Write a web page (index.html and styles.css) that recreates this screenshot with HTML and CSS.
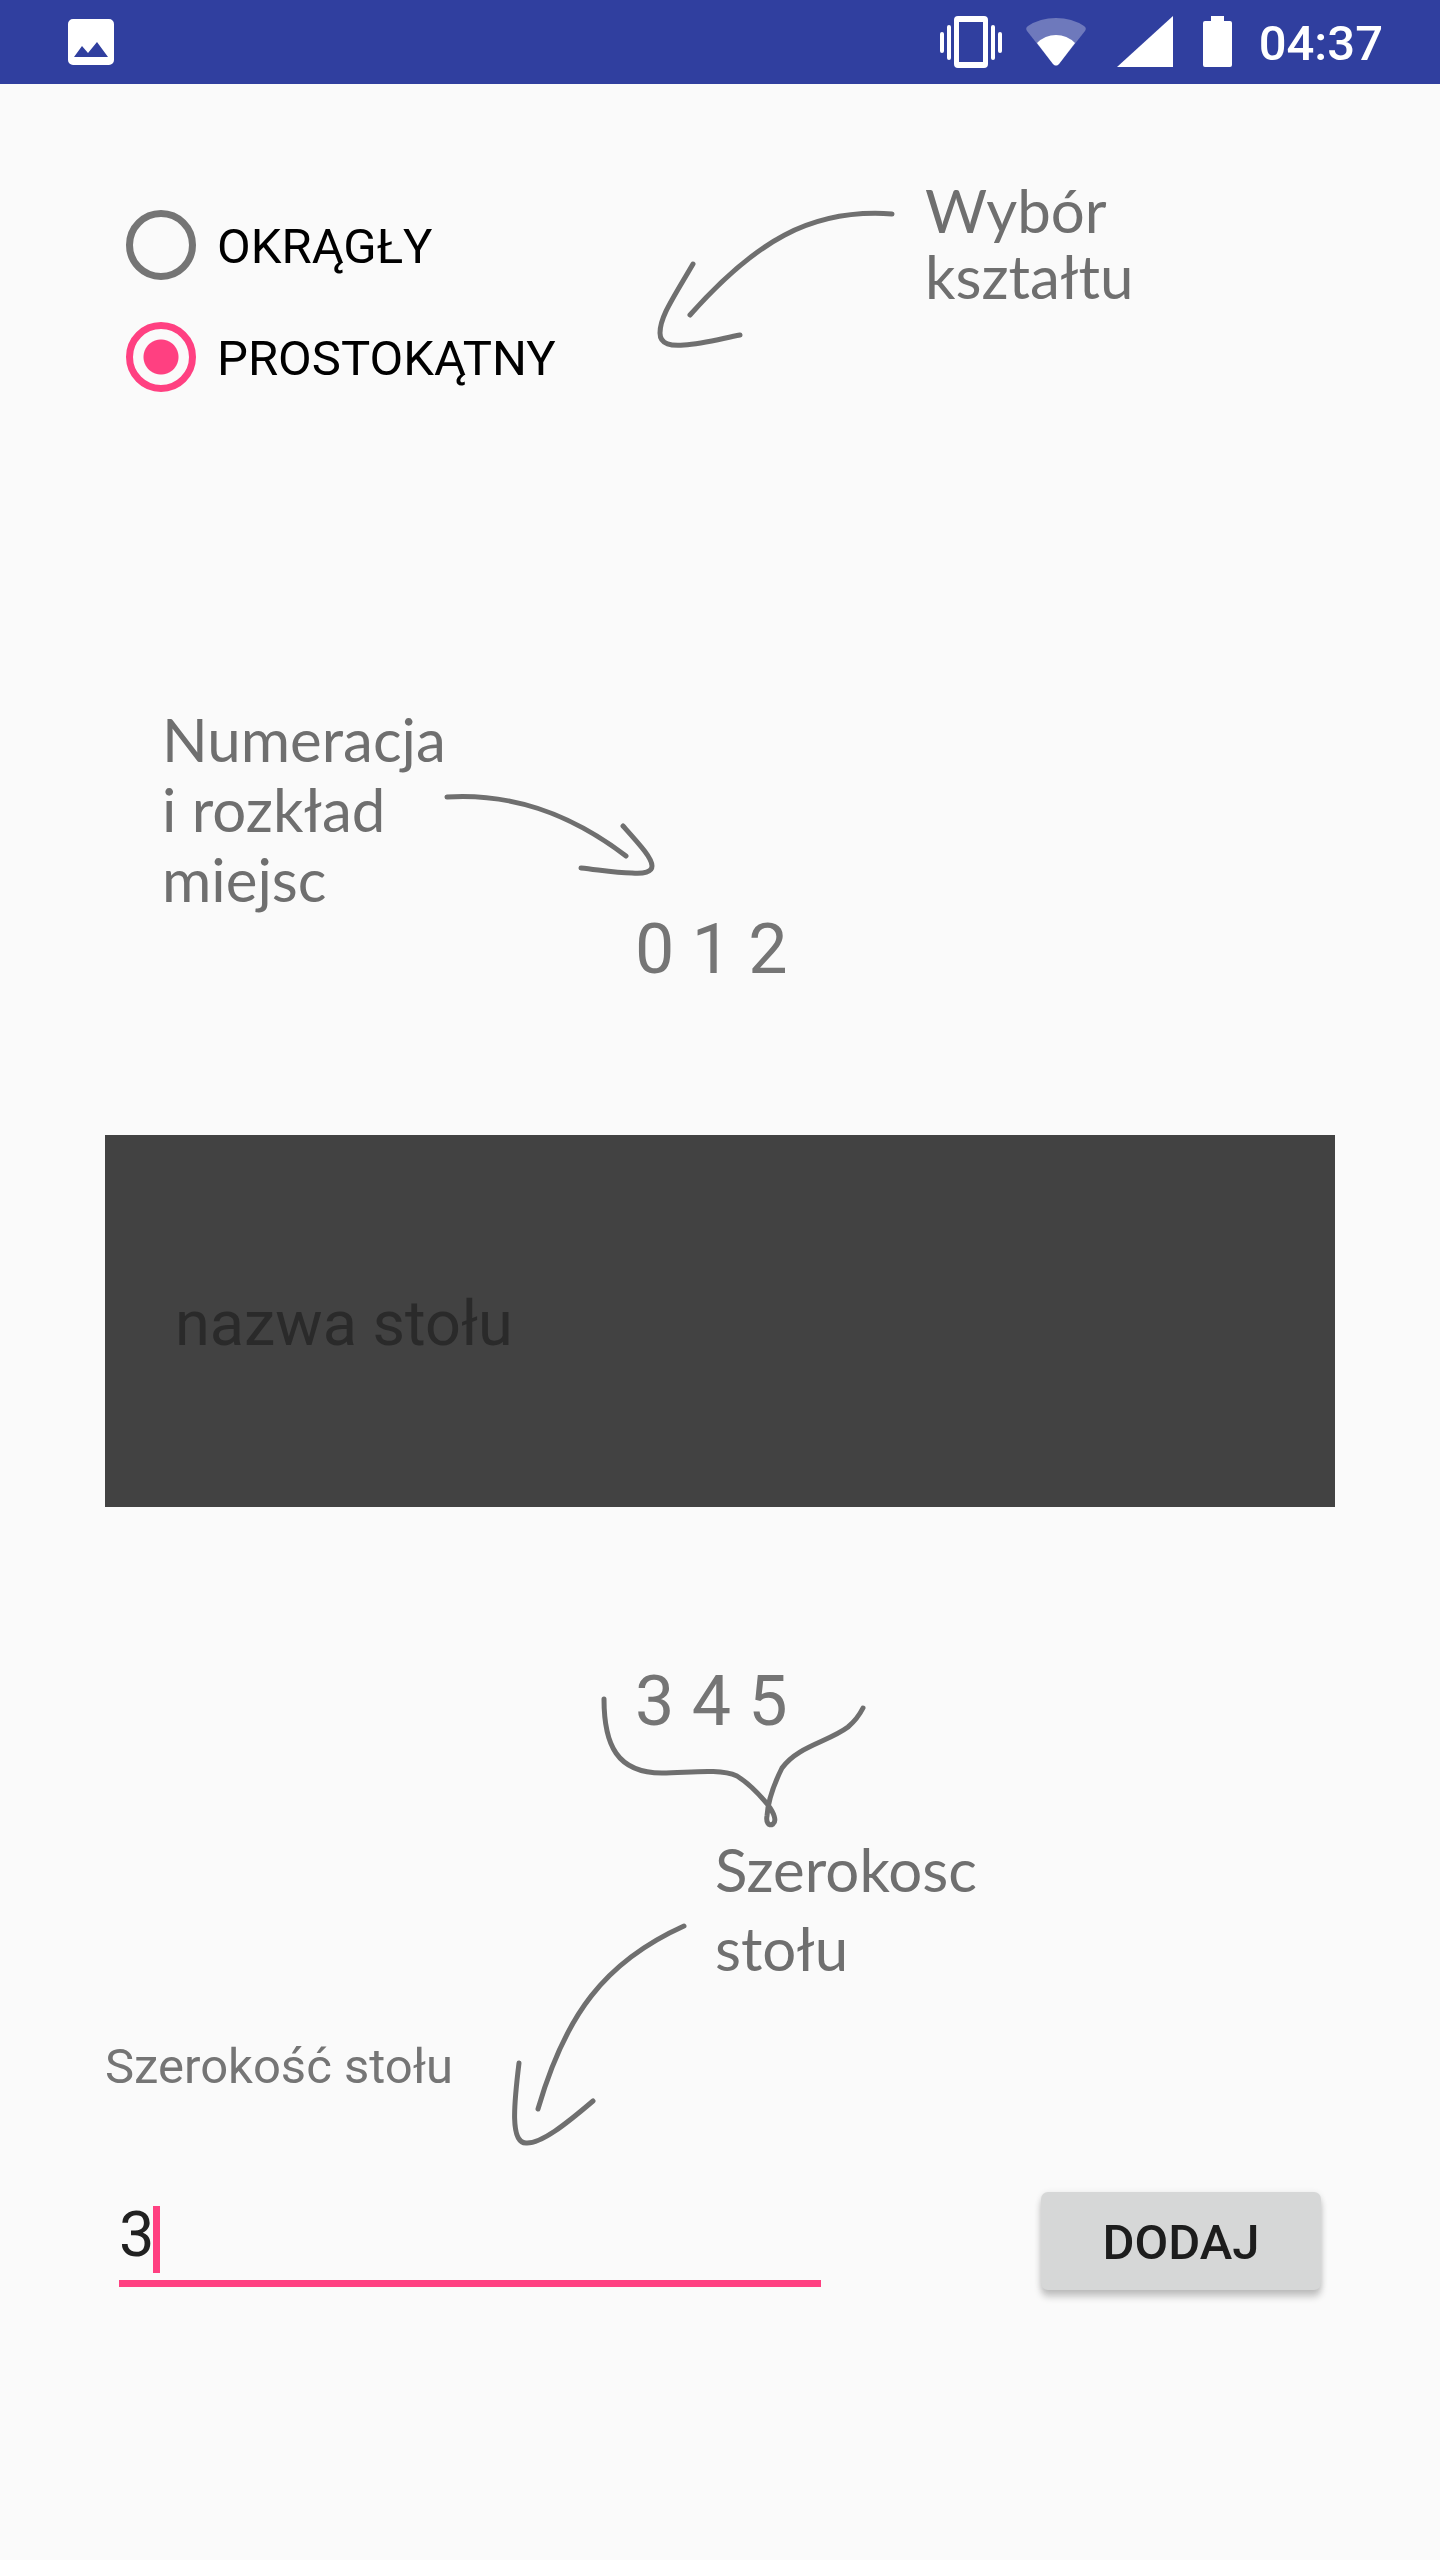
FILE: index.html
```html
<!DOCTYPE html>
<html lang="pl">
<head>
<meta charset="utf-8">
<meta name="viewport" content="width=device-width, initial-scale=1">
<title>Nowy stół</title>
<link rel="stylesheet" href="styles.css">
</head>
<body>
<header class="status">
  <svg class="status-photo" width="46" height="46" viewBox="0 0 46 46" aria-hidden="true"><path fill="#fff" fill-rule="evenodd" d="M5 0h36a5 5 0 0 1 5 5v36a5 5 0 0 1-5 5H5a5 5 0 0 1-5-5V5a5 5 0 0 1 5-5zM6 38h34L29 23l-9 11-6-7z"/></svg>
  <svg width="62" height="52" viewBox="0 0 62 52" aria-hidden="true"><g fill="#fff"><path fill-rule="evenodd" d="M18 0h26a4 4 0 0 1 4 4v44a4 4 0 0 1-4 4H18a4 4 0 0 1-4-4V4a4 4 0 0 1 4-4zm1 6v40h24V6z"/><rect x="0" y="16" width="4" height="21" rx="2"/><rect x="7" y="9" width="4" height="35" rx="2"/><rect x="51" y="9" width="4" height="35" rx="2"/><rect x="58" y="16" width="4" height="21" rx="2"/></g></svg>
  <svg class="status-wifi" width="60" height="52" viewBox="0 0 60 52" aria-hidden="true"><path fill="#fff" fill-opacity=".3" d="M1 15Q-1 12 2 10Q14 2 30 2T58 10Q61 12 59 15L33 48Q30 51 27 48z"/><path fill="#fff" d="M11 27Q19 19 30 19T49 27L33 48Q30 51 27 48z"/></svg>
  <svg class="status-signal" width="56" height="52" viewBox="0 0 56 52" aria-hidden="true"><path fill="#fff" d="M0 51L56 0v51z"/></svg>
  <svg class="status-battery" width="29" height="52" viewBox="0 0 29 52" aria-hidden="true"><path fill="#fff" d="M8 0h13v5h6a2 2 0 0 1 2 2v42a2 2 0 0 1-2 2H2a2 2 0 0 1-2-2V7a2 2 0 0 1 2-2h6z"/></svg>
  <time class="clock">04:37</time>
</header>
<form class="screen">
  <div class="shape">
    <fieldset class="shape-options">
      <label class="option"><input class="radio" type="radio" name="shape" value="round"><span class="option-text">OKRĄGŁY</span></label>
      <label class="option"><input class="radio" type="radio" name="shape" value="rect" checked><span class="option-text">PROSTOKĄTNY</span></label>
    </fieldset>
    <svg class="stroke shape-arrow" width="242" height="144" viewBox="655 208 242 144" aria-hidden="true"><path d="M892 214C810 208 754 243 690 315M693 264C672 300 660 317 660 333C660 345 672 346 684 345C702 344 720 339 740 335"/></svg>
    <p class="note note-shape">Wybór<br>kształtu</p>
  </div>

  <div class="seats">
    <p class="note note-seats">Numeracja<br>i rozkład<br>miejsc</p>
    <svg class="stroke seats-arrow" width="214" height="84" viewBox="442 793 214 84" aria-hidden="true"><path d="M447 797C510 793 568 812 626 856M623 826C640 845 652 858 652 866C652 872 644 874 632 873C615 873 600 870 581 868"/></svg>
  </div>

  <output class="numbers">0 1 2 </output>
  <input class="table-name" type="text" placeholder="nazwa stołu" aria-label="nazwa stołu">
  <div class="numbers-bottom">
    <output class="numbers">3 4 5 </output>
    <svg class="stroke brace" width="270" height="134" viewBox="600 1695 270 134" aria-hidden="true"><path d="M604 1699C604 1745 617 1773 662 1773C688 1773 719 1768 737 1776C748 1783 759 1794 768 1805C774 1813 777 1821 773 1824C768 1827 766 1821 767 1816C768 1800 776 1780 782 1768C798 1746 828 1742 848 1727C855 1721 859 1716 863 1708"/></svg>
  </div>

  <div class="width-info">
    <label class="width-label" for="width">Szerokość stołu</label>
    <svg class="stroke width-arrow" width="180" height="225" viewBox="510 1922 180 225" aria-hidden="true"><path d="M684 1926C604 1962 565 2016 538 2109M519 2063C514 2104 510 2143 526 2143C541 2144 566 2124 593 2101"/></svg>
    <p class="note note-width">Szerokosc<br>stołu</p>
  </div>

  <div class="actions">
    <div class="field">
      <input class="width-input" id="width" type="text" inputmode="numeric" value="3">
      <span class="caret"></span>
    </div>
    <button class="add" type="button">DODAJ</button>
  </div>
</form>
</body>
</html>
```

FILE: styles.css
```css
* { box-sizing: border-box; }

body {
  margin: 0;
  min-height: 100vh;
  background: #fafafa;
  color: #000;
  font: 49px/58px Roboto, sans-serif;
}

p, fieldset { margin: 0; padding: 0; border: 0; }

svg { display: block; flex: none; }

.status {
  display: flex;
  align-items: center;
  height: 84px;
  padding: 0 57px 0 68px;
  background: #303f9f;
  color: #fff;
}
.status-photo { margin-right: auto; }
.status-wifi { margin-left: 24px; }
.status-signal { margin-left: 31px; }
.status-battery { margin-left: 30px; }
.clock { margin-left: 27px; padding-top: 4px; font-weight: 500; }

.screen {
  display: flex;
  flex-direction: column;
  padding: 89px 105px;
}

.stroke {
  fill: none;
  stroke: #6f6f6f;
  stroke-width: 5;
  stroke-linecap: round;
  stroke-linejoin: round;
}

.note {
  padding-top: 4px;
  color: #6f6f6f;
  font-family: Lato, sans-serif;
  font-size: 60px;
  white-space: nowrap;
}
.note-shape { line-height: 66px; }
.note-seats { width: 280px; line-height: 70px; }
.note-width { line-height: 79px; }

.shape {
  display: grid;
  grid-template-columns: 1fr 242px 410px;
  column-gap: 28px;
  align-items: start;
}
.shape-options { margin-top: 16px; }
.shape-arrow { margin-top: 35px; }

.option {
  display: flex;
  align-items: center;
  gap: 21px;
  height: 112px;
  padding-left: 21px;
}
.option-text { padding-top: 4px; }
.radio {
  appearance: none;
  width: 70px;
  height: 70px;
  margin: 0;
  border: 7px solid #757575;
  border-radius: 50%;
}
.radio:checked {
  border-color: #ff4081;
  background: radial-gradient(circle, #ff4081 17px, transparent 18px);
}

.seats {
  display: flex;
  align-items: flex-start;
  margin-top: 287px;
  padding-left: 57px;
}
.seats-arrow { margin-top: 93px; }

.numbers {
  display: block;
  color: #757575;
  font-size: 70px;
  line-height: 70px;
  text-align: center;
  white-space: pre;
}

.table-name {
  width: 100%;
  height: 372px;
  margin: 151px 0 159px;
  padding: 4px 70px 0;
  border: 0;
  border-radius: 0;
  background: #424242;
  color: #fafafa;
  font: 63px/74px Roboto, sans-serif;
}
.table-name::placeholder { color: #2a2a2a; opacity: 1; }

.numbers-bottom { position: relative; }
.brace {
  position: absolute;
  top: 29px;
  left: calc(50% - 120px);
}

.width-info {
  display: flex;
  align-items: flex-start;
  margin-top: 90px;
}
.width-label {
  width: 405px;
  margin-top: 212px;
  color: #757575;
}
.width-arrow { margin: 96px 25px 0 0; }

.actions {
  display: flex;
  justify-content: space-between;
  align-items: flex-start;
  margin-top: 45px;
  padding: 0 14px;
}
.field { position: relative; width: 702px; }
.width-input {
  display: block;
  width: 100%;
  height: 95px;
  padding: 5px 0 9px;
  border: 0;
  border-bottom: 7px solid #ff4081;
  background: none;
  color: #212121;
  font: 63px/74px Roboto, sans-serif;
  outline: 0;
}
.caret {
  position: absolute;
  top: 14px;
  left: 34px;
  width: 7px;
  height: 67px;
  background: #ff4081;
}
.add {
  width: 280px;
  height: 98px;
  padding: 4px 0 0;
  border: 0;
  border-radius: 7px;
  background: #d6d7d7;
  box-shadow: 0 7px 7px rgba(0, 0, 0, .2), 0 1px 6px rgba(0, 0, 0, .1);
  color: #1d1d1d;
  font: 500 49px/58px Roboto, sans-serif;
}
```
